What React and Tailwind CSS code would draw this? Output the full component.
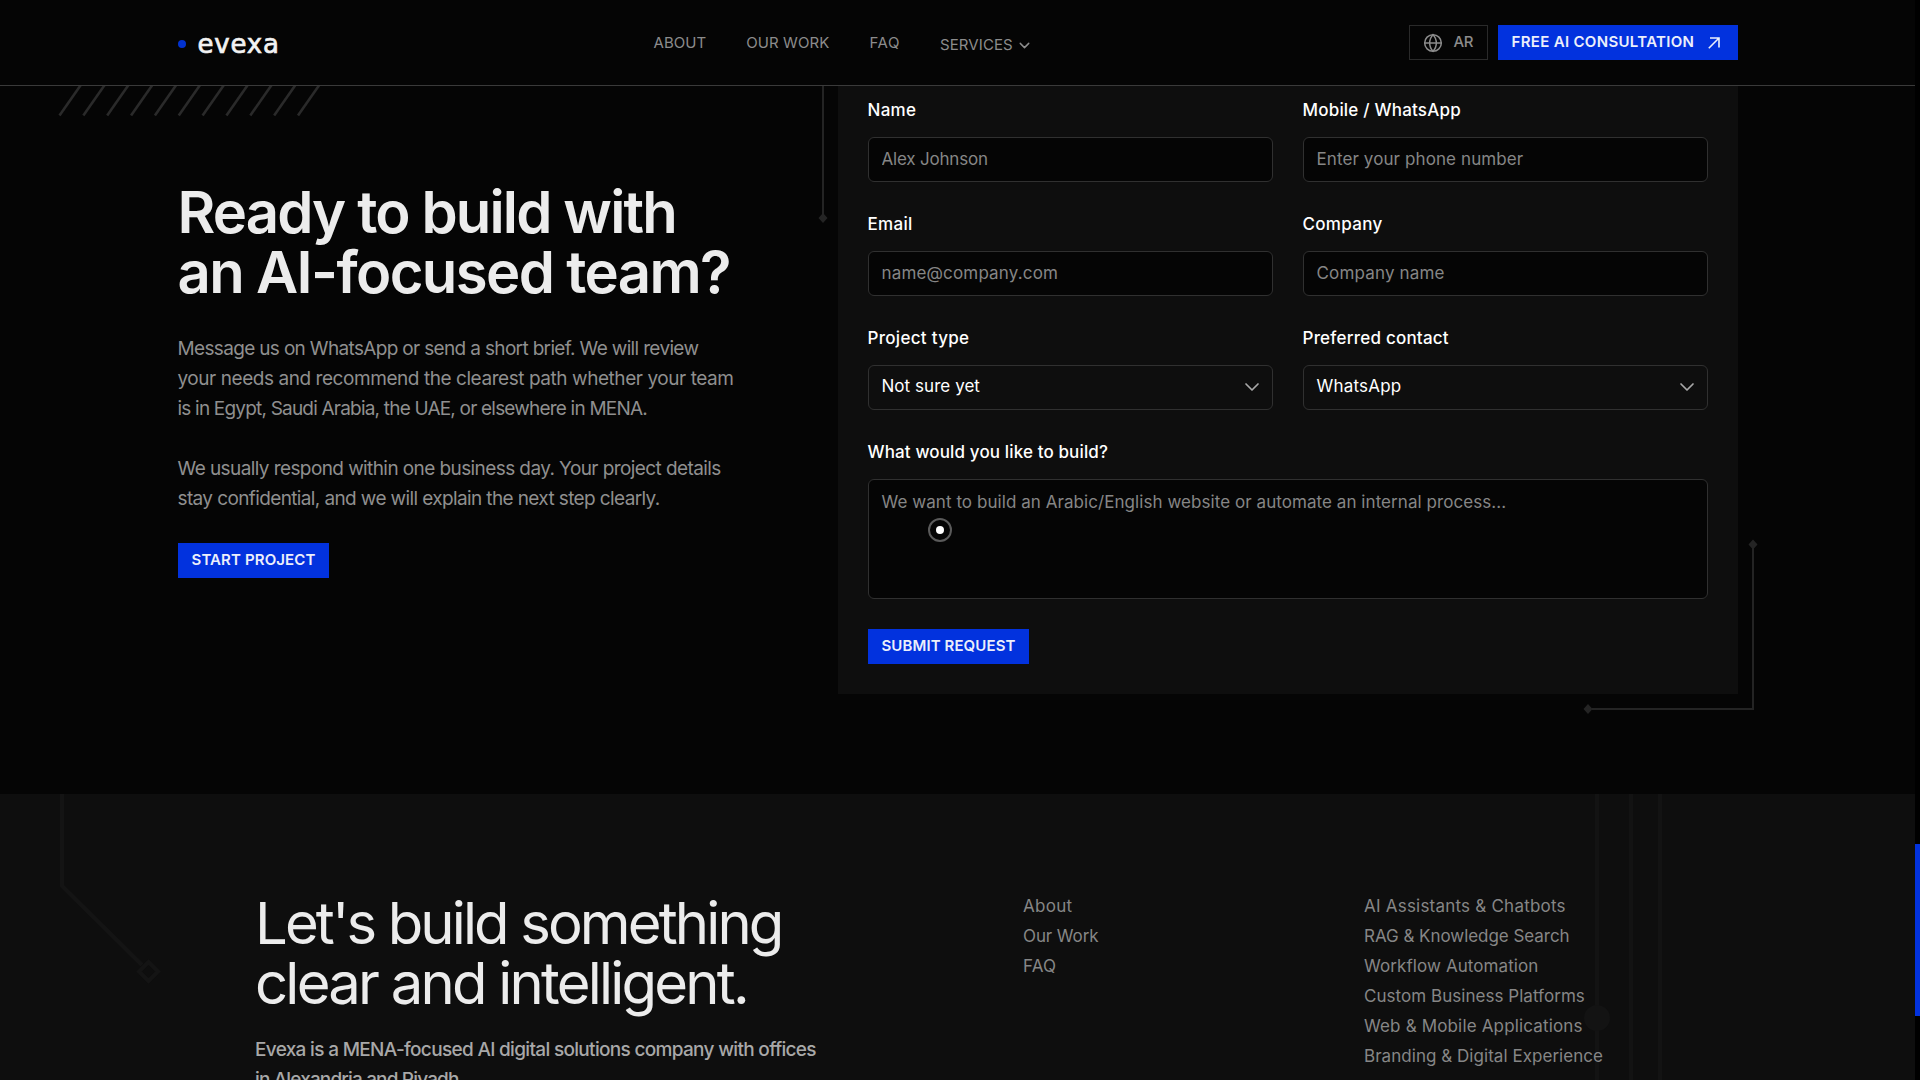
import { ChevronDown, Globe } from 'lucide-react';

const services = [
  { label: 'AI Assistants & Chatbots', tracking: 'tracking-[0.22px]' },
  { label: 'RAG & Knowledge Search', tracking: 'tracking-[-0.04px]' },
  { label: 'Workflow Automation', tracking: 'tracking-[0.09px]' },
  { label: 'Custom Business Platforms', tracking: 'tracking-[0.04px]' },
  { label: 'Web & Mobile Applications', tracking: 'tracking-[0.16px]' },
  { label: 'Branding & Digital Experience', tracking: 'tracking-[0.04px]' },
];

const pages = [
  { label: 'About', tracking: 'tracking-[0.3px]' },
  { label: 'Our Work', tracking: 'tracking-[-0.1px]' },
  { label: 'FAQ', tracking: 'tracking-[0.2px]' },
];

const fields = [
  { label: 'Name', tracking: 'tracking-[0.3px]', text: 'Alex Johnson', textTracking: 'tracking-[-0.2px]' },
  { label: 'Mobile / WhatsApp', tracking: 'tracking-[0.2px]', text: 'Enter your phone number', textTracking: 'tracking-[0.1px]' },
  { label: 'Email', tracking: 'tracking-[0.3px]', text: 'name@company.com', textTracking: 'tracking-[0.16px]' },
  { label: 'Company', tracking: 'tracking-[0.3px]', text: 'Company name', textTracking: 'tracking-[0.17px]' },
  { label: 'Project type', tracking: 'tracking-[0.3px]', text: 'Not sure yet', textTracking: 'tracking-[0.05px]', select: true },
  { label: 'Preferred contact', tracking: 'tracking-[0.22px]', text: 'WhatsApp', textTracking: 'tracking-[0.2px]', select: true },
];

function Header() {
  return (
    <header className="h-[86px] border-b border-[#3a3a3a] bg-[#050505]">
      <div className="mx-auto flex h-full w-[1560px] items-center">
        <a className="flex w-[476px] items-center gap-3">
          <span className="mt-[3px] h-2 w-2 rounded-full bg-[#0232cf]" />
          <span className="pt-0.5 font-['DejaVu_Sans'] text-[26px] leading-none tracking-[0.8px] text-[#f2f2f2] [-webkit-text-stroke:0.7px_#f2f2f2]">
            evexa
          </span>
        </a>

        <nav className="flex items-center gap-10 text-[15px] text-[#8c8c8c]">
          <a className="pt-px tracking-[0.05px]">ABOUT</a>
          <a className="pt-px tracking-[0.08px]">OUR WORK</a>
          <a className="pt-px tracking-[0.6px]">FAQ</a>
          <a className="mt-[5px] flex items-center gap-[3px] tracking-[0.1px]">
            SERVICES
            <ChevronDown size={17} strokeWidth={2} className="mt-px" />
          </a>
        </nav>

        <div className="ml-auto flex gap-[10px]">
          <button className="flex h-[35px] w-[79px] items-center gap-[11px] border border-[#2a2a2a] pl-[13px] text-[15px] font-medium text-[#8c8c8c]">
            <Globe size={20} strokeWidth={1.8} />
            <span className="pb-px tracking-[-0.4px]">AR</span>
          </button>
          <button className="flex h-[35px] w-[240px] items-center justify-between bg-[#0232de] pr-[18px] pl-[14px] text-[15px] font-semibold text-[#eceffb]">
            <span className="pb-px tracking-[0.32px]">FREE AI CONSULTATION</span>
            <svg width="12" height="12" viewBox="0 0 12 12" fill="none" stroke="currentColor" strokeWidth="1.6">
              <path d="M0.8 11.2 L11 1 M2 1 H11 V10.5" />
            </svg>
          </button>
        </div>
      </div>
    </header>
  );
}

function Field({ label, tracking, text, textTracking, select }) {
  return (
    <label className="flex flex-col gap-[15px]">
      <span className={`text-[17px] leading-6 font-medium text-white ${tracking}`}>{label}</span>
      {select ? (
        <span className="flex h-[45px] items-center justify-between rounded-[6px] border border-[#303030] pr-2 pb-px pl-[13px] text-[17px] text-white">
          <span className={textTracking}>{text}</span>
          <ChevronDown size={24} strokeWidth={1.7} className="text-[#a8a8a8]" />
        </span>
      ) : (
        <input
          className={`h-[45px] rounded-[6px] border border-[#303030] bg-[#050505] px-[13px] pb-[2px] text-[17px] placeholder:text-[#868686] ${textTracking}`}
          placeholder={text}
        />
      )}
    </label>
  );
}

function ContactForm() {
  return (
    <form className="relative h-[608px] w-[900px] bg-[#0e0e0e] px-[30px] pt-3">
      <div className="grid grid-cols-2 gap-[30px]">
        {fields.map((f) => (
          <Field key={f.label} {...f} />
        ))}
        <label className="col-span-2 flex flex-col gap-[15px]">
          <span className="text-[17px] leading-6 font-medium tracking-[0.13px] text-white">What would you like to build?</span>
          <textarea
            className="h-[120px] resize-none rounded-[6px] border border-[#303030] bg-[#050505] px-[13px] pt-[10px] text-[17px] leading-6 tracking-[0.06px] placeholder:text-[#868686]"
            placeholder="We want to build an Arabic/English website or automate an internal process..."
          />
        </label>
      </div>
      <button type="button" className="mt-[30px] flex h-[35px] w-[161px] items-center bg-[#0232de] pb-px pl-[14px] text-[15px] font-semibold tracking-[0.1px] text-[#eceffb]">
        SUBMIT REQUEST
      </button>

      {/* Circuit lines around the card */}
      <svg className="absolute top-0 -left-5 text-[#242424]" width="10" height="140" viewBox="0 0 10 140" fill="currentColor">
        <path d="M4 0 H6 V130 H4 Z M5 127 L9.5 132 L5 137 L0.5 132 Z" />
      </svg>
      <svg className="absolute -right-[22px] -bottom-[22px] text-[#242424]" width="178" height="180" viewBox="0 0 178 180" fill="currentColor">
        <path d="M170 8 h2 v166 H10 v-2 H170 Z M171 3.5 l4.5 5 l-4.5 5 l-4.5 -5 Z M6 168 l4.5 5 l-4.5 5 l-4.5 -5 Z" />
      </svg>

      {/* Pointer ring */}
      <span className="absolute top-[432px] left-[90px] flex h-6 w-6 items-center justify-center rounded-full border-2 border-[#5a5a5a]">
        <span className="h-2 w-2 rounded-full bg-white" />
      </span>
    </form>
  );
}

function Contact() {
  return (
    <section className="relative h-[708px] bg-[#050505]">
      {/* Hatching */}
      <svg className="absolute top-0 left-0 text-[#2a2a2a]" width="340" height="32" stroke="currentColor" strokeWidth="2.6">
        {[...Array(11)].map((_, i) => (
          <line key={i} x1={59.5 + i * 23.85} y1="29.5" x2={81.5 + i * 23.85} y2="-2" />
        ))}
      </svg>

      <div className="mx-auto flex w-[1560px] justify-between">
        <div className="pt-24">
          <h2 className="text-[58px] leading-[60px] font-semibold whitespace-nowrap text-[#ececec]">
            <span className="block tracking-[-1.84px]">Ready to build with</span>
            <span className="block tracking-[-1.62px]">an AI-focused team?</span>
          </h2>
          <p className="mt-8 text-[19px] leading-[30px] whitespace-nowrap text-[#8f8f8f]">
            <span className="block tracking-[-0.66px]">Message us on WhatsApp or send a short brief. We will review</span>
            <span className="block tracking-[-0.44px]">your needs and recommend the clearest path whether your team</span>
            <span className="block tracking-[-0.8px]">is in Egypt, Saudi Arabia, the UAE, or elsewhere in MENA.</span>
          </p>
          <p className="mt-[30px] text-[19px] leading-[30px] whitespace-nowrap text-[#8f8f8f]">
            <span className="block tracking-[-0.59px]">We usually respond within one business day. Your project details</span>
            <span className="block tracking-[-0.62px]">stay confidential, and we will explain the next step clearly.</span>
          </p>
          <button className="mt-[29px] flex h-[35px] w-[151px] items-center bg-[#0232de] pb-px pl-[14px] text-[15px] font-semibold tracking-[0.12px] text-[#eceffb]">
            START PROJECT
          </button>
        </div>
        <ContactForm />
      </div>
    </section>
  );
}

function Footer() {
  return (
    <footer className="relative h-[286px] overflow-hidden bg-[#0e0e0e]">
      <svg className="absolute top-0 left-0 text-[#141414]" width="200" height="200" fill="none" stroke="currentColor" strokeWidth="4">
        <path d="M62 0 V92 L142 171" />
        <path d="M148.5 168 L158 177.5 L148.5 187 L139 177.5 Z" />
      </svg>
      <svg className="absolute top-0 right-[242px] text-[#131313]" width="95" height="286" fill="currentColor">
        <path d="M17 0 h4 v286 h-4 Z M51 0 h4 v286 h-4 Z M80 0 h4 v286 h-4 Z" />
        <circle cx="19" cy="224" r="13" />
      </svg>

      <div className="relative flex pt-[97px] pl-[255px]">
        <div className="w-[768px] pt-0.5">
          <h2 className="text-[58px] leading-[60px] whitespace-nowrap text-[#ececec]">
            <span className="block tracking-[-2.87px]">Let's build something</span>
            <span className="block tracking-[-2.77px]">clear and intelligent.</span>
          </h2>
          <p className="mt-[22px] text-[19px] leading-[30px] font-medium tracking-[-0.68px] whitespace-nowrap text-[#a8a8a8]">
            Evexa is a MENA-focused AI digital solutions company with offices
            <br />
            <span className="tracking-[-0.85px]">in Alexandria and Riyadh.</span>
          </p>
        </div>
        <ul className="w-[341px] text-[17px] leading-[30px] text-[#868686]">
          {pages.map((p) => (
            <li key={p.label} className={p.tracking}>{p.label}</li>
          ))}
        </ul>
        <ul className="text-[17px] leading-[30px] text-[#868686]">
          {services.map((s) => (
            <li key={s.label} className={s.tracking}>{s.label}</li>
          ))}
        </ul>
      </div>
    </footer>
  );
}

export default function App() {
  return (
    <div className="flex h-[1080px] overflow-hidden bg-[#050505] font-['Inter',sans-serif]">
      <div className="flex-1">
        <Header />
        <Contact />
        <Footer />
      </div>
      {/* Scrollbar */}
      <div className="w-[5px] bg-black pt-[844px]">
        <div className="h-[172px] bg-[#0232de]" />
      </div>
    </div>
  );
}
